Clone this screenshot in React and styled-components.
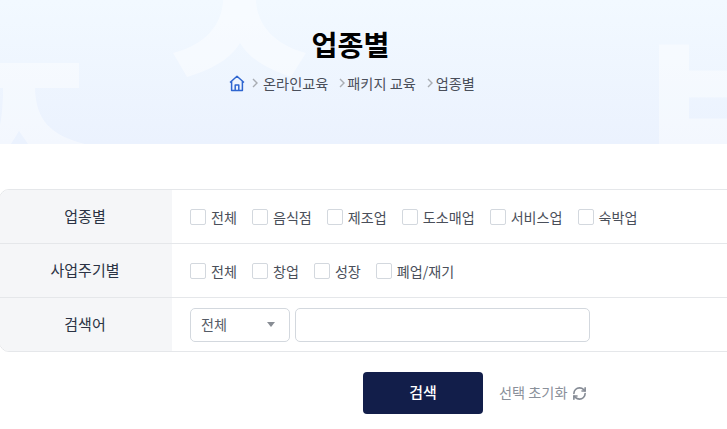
import React from "react";
import styled, { createGlobalStyle } from "styled-components";
import { RefreshCw } from "lucide-react";

const Global = createGlobalStyle`
  html, body { margin: 0; padding: 0; background: #fff; }
  body { font-family: "Noto Sans CJK KR", "Noto Sans", sans-serif; overflow: hidden; }
  * { box-sizing: border-box; }
`;
const Page = styled.div`width: 727px; height: 429px; overflow: hidden;`;
const Hero = styled.header`
  position: relative; height: 144px; overflow: hidden;
  background: linear-gradient(180deg, #f2f9ff 0%, #ebf2fe 100%);
  display: flex; flex-direction: column; align-items: center; padding: 23px 26px 0 0;
`;
const Deco = styled.svg`position: absolute; left: 0; top: 0;`;
const Title = styled.h1`
  position: relative; margin: 0; font-size: 28.2px; line-height: 42px; font-weight: 700; color: #000;
`;
const Crumbs = styled.nav`
  position: relative; display: flex; align-items: center; height: 24px; margin: 6px 0 0 3px; font-size: 14.2px; color: #4a4f5a;
`;
const Chevron = styled.svg`margin: 0 ${p => p.$r}px 0 ${p => p.$l}px; flex: none;`;
const Main = styled.main`padding-top: 45px;`;
const Table = styled.div`
  width: 760px; margin-left: -1px; border: 1px solid #e5e7ea; border-radius: 10px; overflow: hidden;
`;
const Row = styled.div`
  display: flex; height: 54px;
  & + & { border-top: 1px solid #e5e7ea; }
  &:first-child { height: 53px; }
`;
const Head = styled.div`
  width: 172px; flex: none; background: #f5f6f8; display: flex; align-items: center; justify-content: center;
  padding: 0 2px 2px 0; font-size: 15px; color: #2b3344;
`;
const Cell = styled.div`flex: 1; display: flex; align-items: center; padding-left: 18px; gap: 15px;`;
const Check = styled.label`display: inline-flex; align-items: center; gap: 5px; font-size: 14.1px; color: #4a4f5a;`;
const Box = styled.span`width: 16px; height: 16px; border: 1px solid #d3d8de; border-radius: 2px; background: #fff; flex: none;`;
const Select = styled.div`
  width: 100px; height: 34px; border: 1px solid #d3d8de; border-radius: 5px; display: flex; align-items: center; justify-content: space-between;
  padding: 0 14px 2px 10px; font-size: 14.1px; color: #555b66;
`;
const Caret = styled.span`width: 0; height: 0; margin-top: 2px; border-left: 4.5px solid transparent; border-right: 4.5px solid transparent; border-top: 5px solid #888d94;`;
const Input = styled.div`width: 295px; height: 34px; margin-left: -10px; border: 1px solid #d3d8de; border-radius: 5px; background: #fff;`;
const Actions = styled.div`display: flex; align-items: center; margin-top: 20px; padding-left: 363px;`;
const Search = styled.button`
  width: 120px; height: 42px; border: 0; border-radius: 4px; padding: 0 0 3px; background: #121e4a; color: #fff; font: 500 15px "Noto Sans CJK KR", sans-serif;
`;
const Reset = styled.button`
  display: flex; align-items: center; gap: 5px; margin-left: 16px; padding: 0; border: 0; background: none; color: #8a909a; font: 400 14.2px "Noto Sans CJK KR", sans-serif;
`;
const ResetLabel = styled.span`margin-top: -2px;`;

const Chev = ({ l, r }) => (
  <Chevron $l={l} $r={r} width="6" height="10" viewBox="0 0 6 10"><path d="M1 1l4 4-4 4" fill="none" stroke="#a9adb3" strokeWidth="1.4" /></Chevron>
);
const Opt = ({ children }) => <Check><Box />{children}</Check>;

export default function App() {
  return (
    <Page>
      <Global />
      <Hero>
        <Deco width="727" height="144" viewBox="0 0 727 144" fill="#fff" fillOpacity="0.42">
          <path d="M223 0C222 25 205 45 173 53L187 77C210 70 230 60 240 43C250 60 270 70 291 77L306 53C275 45 257 25 256 0Z" />
          <path d="M0 63H79V88H35C36 120 50 135 85 144H28L19 131L11 144H0V125C2 115 3 100 3 88H0Z" />
          <path d="M659 44.5h30v26h38v27h-38v21h38v26h-68z" />
        </Deco>
        <Title>업종별</Title>
        <Crumbs>
          <svg width="16" height="17" viewBox="0 0 16 17" fill="none" stroke="#2f66d0" strokeWidth="1.5" strokeLinejoin="round"><path d="M1 7.5L8 1.2l7 6.3M2.6 6.5V15.5h10.8V6.5M6.2 15.5V10h3.6v5.5" /></svg>
          <Chev l={7} r={5} />온라인교육
          <Chev l={11} r={2} />패키지 교육
          <Chev l={11} r={3} />업종별
        </Crumbs>
      </Hero>
      <Main>
        <Table>
          <Row>
            <Head>업종별</Head>
            <Cell>
              <Opt>전체</Opt><Opt>음식점</Opt><Opt>제조업</Opt><Opt>도소매업</Opt><Opt>서비스업</Opt><Opt>숙박업</Opt>
            </Cell>
          </Row>
          <Row>
            <Head>사업주기별</Head>
            <Cell>
              <Opt>전체</Opt><Opt>창업</Opt><Opt>성장</Opt><Opt>폐업/재기</Opt>
            </Cell>
          </Row>
          <Row>
            <Head>검색어</Head>
            <Cell>
              <Select>전체<Caret /></Select>
              <Input />
            </Cell>
          </Row>
        </Table>
        <Actions>
          <Search>검색</Search>
          <Reset><ResetLabel>선택 초기화</ResetLabel><RefreshCw size={15} strokeWidth={2.6} color="#858b95" /></Reset>
        </Actions>
      </Main>
    </Page>
  );
}
